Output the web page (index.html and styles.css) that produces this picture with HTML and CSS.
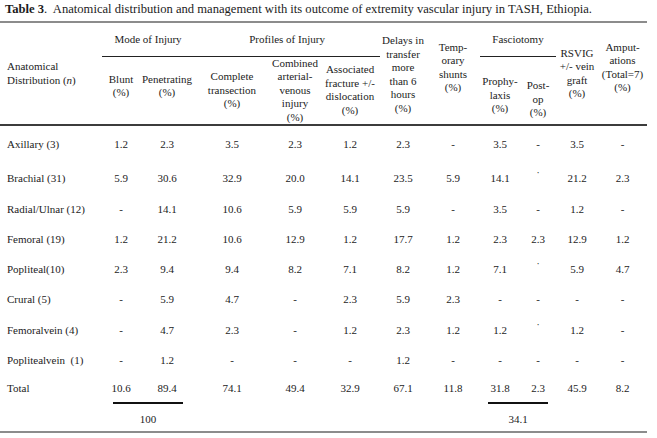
FILE: index.html
```html
<!DOCTYPE html>
<html>
<head>
<meta charset="utf-8">
<link rel="stylesheet" href="styles.css">
</head>
<body>
<div class="page">
  <p class="caption"><b>Table 3</b>.&nbsp; Anatomical distribution and management with its outcome of extremity vascular injury in TASH, Ethiopia.</p>
  <table class="tbl">
    <colgroup>
      <col class="c-anat"><col class="c-blunt"><col class="c-pen"><col class="c-comp"><col class="c-comb"><col class="c-assoc"><col class="c-delay"><col class="c-temp"><col class="c-pro"><col class="c-post"><col class="c-rsv"><col class="c-amp">
    </colgroup>
    <thead>
      <tr class="h1">
        <th rowspan="2" class="left">Anatomical<br>Distribution (<i>n</i>)</th>
        <th colspan="2" class="grp">Mode of Injury</th>
        <th colspan="3" class="grp">Profiles of Injury</th>
        <th rowspan="2" class="delay">Delays in<br>transfer<br>more<br>than 6<br>hours<br>(%)</th>
        <th rowspan="2" class="up">Temp-<br>orary<br>shunts<br>(%)</th>
        <th colspan="2" class="grp">Fasciotomy</th>
        <th rowspan="2" class="rsv">RSVIG<br>+/- vein<br>graft<br>(%)</th>
        <th rowspan="2" class="up">Amput-<br>ations<br>(Total=7)<br>(%)</th>
      </tr>
      <tr class="h2">
        <th class="hi">Blunt<br>(%)</th>
        <th class="hi">Penetrating<br>(%)</th>
        <th>Complete<br>transection<br>(%)</th>
        <th>Combined<br>arterial-<br>venous<br>injury<br>(%)</th>
        <th>Associated<br>fracture +/-<br>dislocation<br>(%)</th>
        <th class="pro">Prophy-<br>laxis<br>(%)</th>
        <th class="lo">Post-<br>op<br>(%)</th>
      </tr>
    </thead>
    <tbody>
      <tr class="r-axi"><td class="left">Axillary (3)</td><td>1.2</td><td>2.3</td><td>3.5</td><td>2.3</td><td>1.2</td><td>2.3</td><td>-</td><td>3.5</td><td>-</td><td>3.5</td><td>-</td></tr>
      <tr class="r-bra"><td class="left">Brachial (31)</td><td>5.9</td><td>30.6</td><td>32.9</td><td>20.0</td><td>14.1</td><td>23.5</td><td>5.9</td><td>14.1</td><td><span class="dot">˙</span></td><td>21.2</td><td>2.3</td></tr>
      <tr class="r-rad"><td class="left">Radial/Ulnar (12)</td><td>-</td><td>14.1</td><td>10.6</td><td>5.9</td><td>5.9</td><td>5.9</td><td>-</td><td>3.5</td><td>-</td><td>1.2</td><td>-</td></tr>
      <tr><td class="left">Femoral (19)</td><td>1.2</td><td>21.2</td><td>10.6</td><td>12.9</td><td>1.2</td><td>17.7</td><td>1.2</td><td>2.3</td><td>2.3</td><td>12.9</td><td>1.2</td></tr>
      <tr><td class="left">Popliteal(10)</td><td>2.3</td><td>9.4</td><td>9.4</td><td>8.2</td><td>7.1</td><td>8.2</td><td>1.2</td><td>7.1</td><td><span class="dot">˙</span></td><td>5.9</td><td>4.7</td></tr>
      <tr><td class="left">Crural (5)</td><td>-</td><td>5.9</td><td>4.7</td><td>-</td><td>2.3</td><td>5.9</td><td>2.3</td><td>-</td><td>-</td><td>-</td><td>-</td></tr>
      <tr class="r-fv"><td class="left">Femoralvein (4)</td><td>-</td><td>4.7</td><td>2.3</td><td>-</td><td>1.2</td><td>2.3</td><td>1.2</td><td>1.2</td><td><span class="dot">˙</span></td><td>1.2</td><td>-</td></tr>
      <tr class="r-pv"><td class="left">Popliteal­vein&nbsp; (1)</td><td>-</td><td>1.2</td><td>-</td><td>-</td><td>-</td><td>1.2</td><td>-</td><td>-</td><td>-</td><td>-</td><td>-</td></tr>
      <tr class="r-tot"><td class="left">Total</td><td>10.6</td><td>89.4</td><td>74.1</td><td>49.4</td><td>32.9</td><td>67.1</td><td>11.8</td><td>31.8</td><td>2.3</td><td>45.9</td><td>8.2</td></tr>
      <tr class="r-sum"><td></td><td colspan="2"><div class="sum">100</div></td><td></td><td></td><td></td><td></td><td></td><td colspan="2"><div class="sum narrow">34.1</div></td><td></td><td></td></tr>
    </tbody>
  </table>
</div>
</body>
</html>
```

FILE: styles.css
```css
html, body {
  margin: 0;
  padding: 0;
  background: #ffffff;
}

.page {
  width: 647px;
  font-family: "Liberation Serif", "Times New Roman", serif;
  color: #1c1c1c;
}

.caption {
  margin: 0;
  padding: 2px 0 0 5px;
  height: 19px;
  font-size: 12.6px;
  line-height: 15px;
  white-space: nowrap;
}

.caption b {
  font-weight: bold;
}

.tbl {
  width: 647px;
  table-layout: fixed;
  border-collapse: collapse;
  border-top: 2px solid #8c8c8c;
  border-bottom: 2px solid #8c8c8c;
  font-size: 11px;
  line-height: 13.6px;
}

.c-anat { width: 102px; }
.c-blunt { width: 38px; }
.c-pen { width: 54px; }
.c-comp { width: 76px; }
.c-comb { width: 50px; }
.c-assoc { width: 60px; }
.c-delay { width: 46px; }
.c-temp { width: 54px; }
.c-pro { width: 40px; }
.c-post { width: 36px; }
.c-rsv { width: 42px; }
.c-amp { width: 49px; }

th, td {
  padding: 0;
  text-align: center;
  vertical-align: middle;
  font-weight: normal;
}

.left {
  text-align: left;
  padding-left: 7px;
}

.h1 { height: 34px; }
.h1 th.grp {
  border-bottom: 1px solid #222;
  padding-top: 2px;
}
.h1 th.up { padding-bottom: 12px; }
.h1 th.delay { padding-top: 2px; }
.h2 { height: 65px; }
.h2 th.hi { padding-bottom: 8px; }
.h2 th.pro { padding-top: 10px; }
.h2 th.lo { padding-top: 18px; }

tbody tr:first-child td {
  border-top: 2px solid #3c3c3c;
}

tbody tr { height: 30px; }
tbody tr.r-axi { height: 37px; }
tbody tr.r-bra { height: 33px; }
tbody tr.r-rad { height: 29px; }
tbody tr.r-fv { height: 33px; }
tbody tr.r-pv { height: 27px; }
tbody tr.r-tot { height: 28px; }
tbody tr.r-sum { height: 30px; }
tbody tr.r-sum td { vertical-align: top; }

.sum {
  width: 70px;
  margin: 0 auto;
  border-top: 2px solid #111;
  padding-top: 9px;
}
.sum.narrow { width: 60px; }

.dot {
  position: relative;
  top: -3px;
}
```
